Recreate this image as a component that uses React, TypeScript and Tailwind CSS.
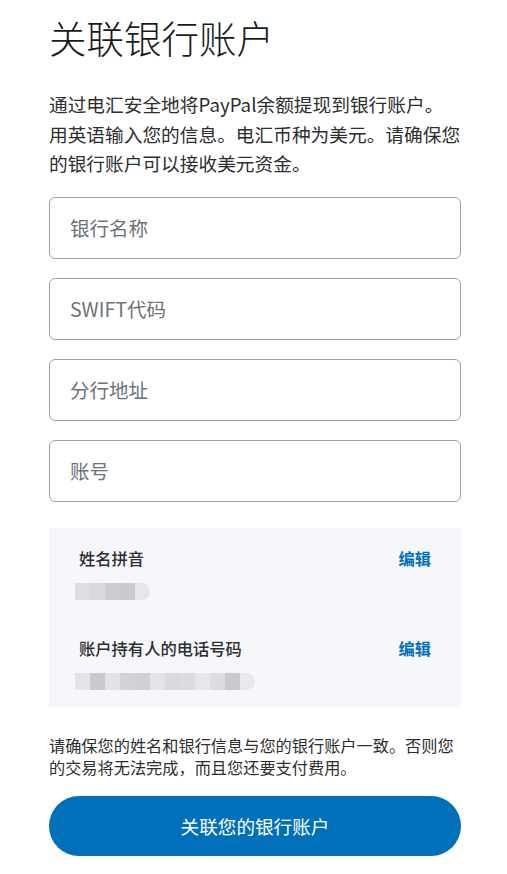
import React from "react";

const fields = ["银行名称", "SWIFT代码", "分行地址", "账号"];

// 模糊处理的文字块
const Blur = ({ tones }: { tones: string[] }) => (
  <div className="flex h-[17px]">
    {tones.map((t, i) => (
      <div
        key={i}
        className={`h-full w-[15px] ${t} ${i === tones.length - 1 ? "rounded-r-full" : ""}`}
      />
    ))}
  </div>
);

const App: React.FC = () => {
  return (
    <div
      className="min-h-screen bg-white pl-[49px] text-[#2c2e2f]"
      style={{ fontFamily: '"Noto Sans CJK SC", "Noto Sans", sans-serif' }}
    >
      <div className="w-[413px] pb-4">
        {/* 标题 */}
        <h1 className="pt-[15px] text-[37.5px] font-light leading-[44px] text-[#1a1a1a]">
          关联银行账户
        </h1>

        <p className="mt-[30px] whitespace-nowrap text-[18.7px] leading-[29.5px] text-[#2c2e2f]">
          通过电汇安全地将PayPal余额提现到银行账户。
          <br />
          用英语输入您的信息。电汇币种为美元。请确保您
          <br />
          的银行账户可以接收美元资金。
        </p>

        {/* 输入框 */}
        <div className="mt-[19px] flex w-[412px] flex-col gap-[19px]">
          {fields.map((f) => (
            <input
              key={f}
              placeholder={f}
              className="h-[62px] w-full rounded-[6px] border border-[#9da3a6] bg-white px-5 text-[19.5px] text-[#2c2e2f] outline-none placeholder:text-[#6c7378]"
            />
          ))}
        </div>

        {/* 个人信息 */}
        <div className="mt-[26px] w-[412px] bg-[#f5f7fa] px-[30px] pb-[17px] pt-[18px]">
          <div className="flex items-center justify-between text-[16.3px] leading-[24px]">
            <span className="font-medium text-[#2c2e2f]">姓名拼音</span>
            <span className="font-bold text-[#0070ba]">编辑</span>
          </div>
          <div className="-ml-[4px] mt-[13px]">
            <Blur tones={["bg-[#dddee1]", "bg-[#d8d9dc]", "bg-[#cbccd0]", "bg-[#c9cacd]", "bg-[#e6e7ea]"]} />
          </div>
          <div className="mt-[36px] flex items-center justify-between text-[16.3px] leading-[24px]">
            <span className="font-medium text-[#2c2e2f]">账户持有人的电话号码</span>
            <span className="font-bold text-[#0070ba]">编辑</span>
          </div>
          <div className="-ml-[4px] mt-[13px]">
            <Blur
              tones={[
                "bg-[#e3e4e7]",
                "bg-[#c9cacd]",
                "bg-[#e2e3e6]",
                "bg-[#d3d4d8]",
                "bg-[#cfd0d4]",
                "bg-[#e3e4e7]",
                "bg-[#d9dadd]",
                "bg-[#dbdce0]",
                "bg-[#e6e7ea]",
                "bg-[#dcdde0]",
                "bg-[#c9cacd]",
                "bg-[#e8e9ec]",
              ]}
            />
          </div>
        </div>

        <p className="mt-[27px] text-[16.2px] leading-[22px] text-[#2c2e2f]">
          请确保您的姓名和银行信息与您的银行账户一致。否则您的交易将无法完成，而且您还要支付费用。
        </p>

        <button className="mt-[18px] flex h-[60px] w-[412px] items-center justify-center rounded-full bg-[#0070ba] text-[18.6px] text-white">
          关联您的银行账户
        </button>
      </div>
    </div>
  );
};

export default App;
